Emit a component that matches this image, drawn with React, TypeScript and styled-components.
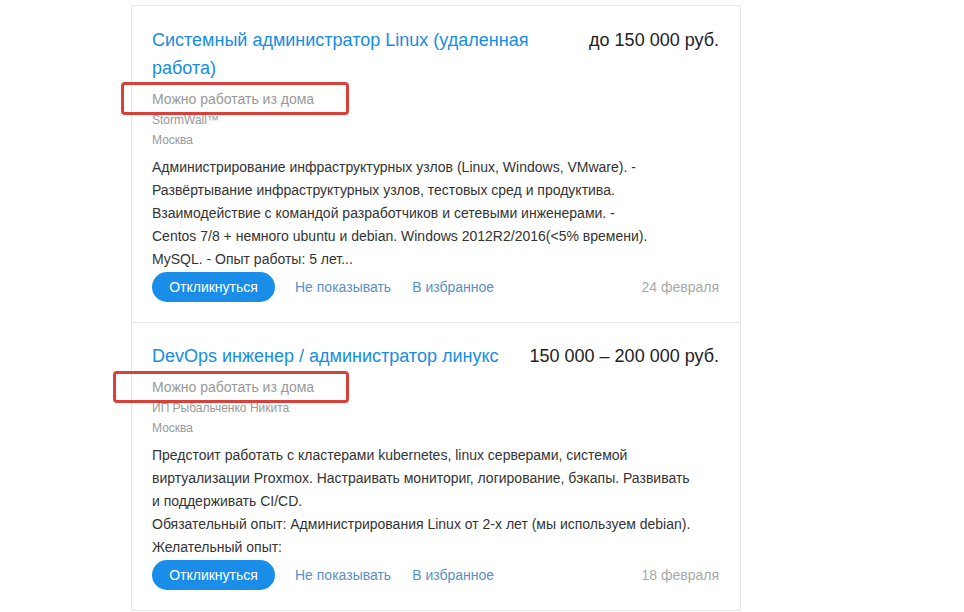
import React from "react";
import styled, { createGlobalStyle } from "styled-components";

const Global = createGlobalStyle`
  html, body { margin: 0; padding: 0; background: #fff; }
  body { font-family: "Liberation Sans", Arial, sans-serif; }
`;

const Page = styled.div`
  padding: 5px 0 0 131px;
  width: 964px;
  height: 612px;
  box-sizing: border-box;
  overflow: hidden;
`;

const List = styled.div`
  width: 610px;
  box-sizing: border-box;
  border: 1px solid #e6e6e6;
`;

const Item = styled.div<{ $first?: boolean }>`
  padding: ${(p) => (p.$first ? "20px" : "19px")} 20px 20px 20px;
  border-top: ${(p) => (p.$first ? "none" : "1px solid #e6e6e6")};
`;

const Head = styled.div`
  display: flex;
  justify-content: space-between;
  align-items: flex-start;
  gap: 30px;
`;

const Title = styled.a`
  font-size: 18px;
  line-height: 28px;
  color: #168de2;
  text-decoration: none;
  max-width: 390px;
`;

const Salary = styled.div`
  font-size: 18px;
  line-height: 28px;
  color: #222;
  white-space: nowrap;
  margin-right: 1px;
`;

const Remote = styled.div`
  position: relative;
  margin-top: 6px;
  font-size: 14px;
  line-height: 22px;
  color: #999;
`;

const Mark = styled.span<{ $left: number; $top: number; $w: number; $h: number }>`
  position: absolute;
  left: ${(p) => p.$left}px;
  top: ${(p) => p.$top}px;
  width: ${(p) => p.$w}px;
  height: ${(p) => p.$h}px;
  box-sizing: border-box;
  border: 3px solid #d9403a;
  border-radius: 4px;
`;

const Meta = styled.div`
  font-size: 12px;
  line-height: 20px;
  color: #999;
`;

const Desc = styled.div`
  margin-top: 6px;
  font-size: 14px;
  line-height: 23px;
  color: #333;
  white-space: nowrap;
`;

const Actions = styled.div`
  display: flex;
  align-items: center;
  margin-top: 1px;
  height: 30px;
`;

const Respond = styled.button`
  height: 30px;
  padding: 0 16px;
  border: none;
  border-radius: 15px;
  background: #1a8de8;
  color: #fff;
  font-family: "Liberation Sans", Arial, sans-serif;
  font-size: 14px;
  margin-right: 20px;
  width: 123px;
`;

const LinkBtn = styled.a`
  font-size: 14px;
  color: #5b8fc7;
  margin-right: 21px;
  text-decoration: none;
`;

const Date = styled.span`
  margin-left: auto;
  font-size: 14px;
  color: #aaa;
  margin-right: 1px;
`;

type Vac = {
  title: string;
  salary: string;
  company: string;
  city: string;
  lines: string[];
  date: string;
  mark: { left: number; top: number; w: number; h: number };
};

const vacancies: Vac[] = [
  {
    title: "Системный администратор Linux (удаленная работа)",
    salary: "до 150 000 руб.",
    company: "StormWall™",
    city: "Москва",
    lines: [
      "Администрирование инфраструктурных узлов (Linux, Windows, VMware). -",
      "Развёртывание инфраструктурных узлов, тестовых сред и продуктива.",
      "Взаимодействие с командой разработчиков и сетевыми инженерами. -",
      "Centos 7/8 + немного ubuntu и debian. Windows 2012R2/2016(<5% времени).",
      "MySQL. - Опыт работы: 5 лет...",
    ],
    date: "24 февраля",
    mark: { left: -31, top: -6, w: 228, h: 33 },
  },
  {
    title: "DevOps инженер / администратор линукс",
    salary: "150 000 – 200 000 руб.",
    company: "ИП Рыбальченко Никита",
    city: "Москва",
    lines: [
      "Предстоит работать с кластерами kubernetes, linux серверами, системой",
      "виртуализации Proxmox. Настраивать мониториг, логирование, бэкапы. Развивать",
      "и поддерживать CI/CD.",
      "Обязательный опыт: Администрирования Linux от 2-х лет (мы используем debian).",
      "Желательный опыт:",
    ],
    date: "18 февраля",
    mark: { left: -39, top: -5, w: 236, h: 32 },
  },
];

export default function App() {
  return (
    <>
      <Global />
      <Page>
        <List>
          {vacancies.map((v, i) => (
            <Item key={i} $first={i === 0}>
              <Head>
                <Title href="#">{v.title}</Title>
                <Salary>{v.salary}</Salary>
              </Head>
              <Remote>
                Можно работать из дома
                <Mark $left={v.mark.left} $top={v.mark.top} $w={v.mark.w} $h={v.mark.h} />
              </Remote>
              <Meta>{v.company}</Meta>
              <Meta>{v.city}</Meta>
              <Desc>
                {v.lines.map((l, j) => (
                  <div key={j}>{l}</div>
                ))}
              </Desc>
              <Actions>
                <Respond>Откликнуться</Respond>
                <LinkBtn href="#">Не показывать</LinkBtn>
                <LinkBtn href="#">В избранное</LinkBtn>
                <Date>{v.date}</Date>
              </Actions>
            </Item>
          ))}
        </List>
      </Page>
    </>
  );
}
